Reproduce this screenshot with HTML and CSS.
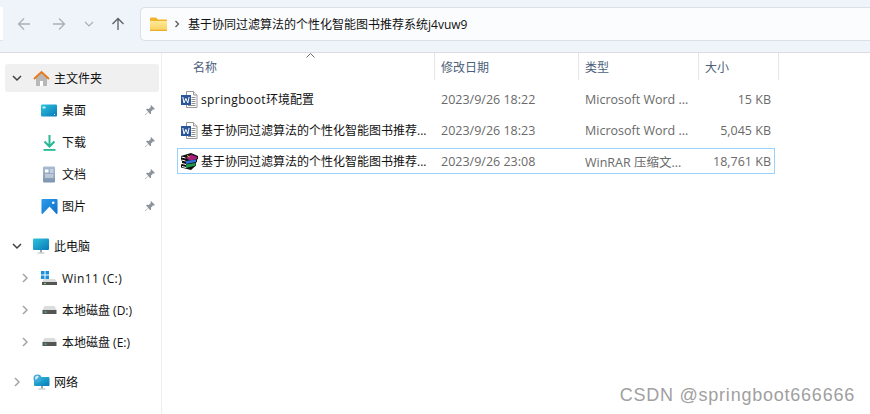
FILE: index.html
```html
<!DOCTYPE html>
<html lang="zh-CN">
<head>
<meta charset="utf-8">
<title>基于协同过滤算法的个性化智能图书推荐系统j4vuw9</title>
<link rel="stylesheet" href="styles.css">
</head>
<body>
<svg class="defs" width="0" height="0" aria-hidden="true">
  <defs>
    <linearGradient id="gScreen" x1="0" y1="0" x2="1" y2="1"><stop offset="0" stop-color="#2cc4dc"/><stop offset="1" stop-color="#0a78b8"/></linearGradient>
    <linearGradient id="gDoc" x1="0" y1="0" x2="0" y2="1"><stop offset="0" stop-color="#a9bcd2"/><stop offset="1" stop-color="#7d94b0"/></linearGradient>
    <linearGradient id="gPic" x1="0" y1="0" x2="1" y2="1"><stop offset="0" stop-color="#2a9cec"/><stop offset="1" stop-color="#1070c8"/></linearGradient>
    <linearGradient id="gFolder" x1="0" y1="0" x2="0" y2="1"><stop offset="0" stop-color="#ffe99a"/><stop offset="1" stop-color="#fbcf5a"/></linearGradient>
    <symbol id="pin" viewBox="0 0 12 12"><path d="M7 1l4 4-1 .6-1-.2-2 2 .1 2-.8.8-2.2-2.3L1.500 11 1 10.500l3.200-2.700L2 5.600l.8-.8 2 .1 2-2-.2-1z" fill="#8c949c"/></symbol>
    <symbol id="chevR" viewBox="0 0 10 10"><path d="M3 1l4 4-4 4" fill="none" stroke="#a4a4a4" stroke-width="1.500"/></symbol>
    <symbol id="chevD" viewBox="0 0 10 10"><path d="M1 3l4 4 4-4" fill="none" stroke="#404040" stroke-width="1.500"/></symbol>
    <symbol id="drive" viewBox="0 0 16 10"><path d="M3 1h10l2 4H1z" fill="#dcdcdc"/><rect x="1" y="5" width="14" height="4" fill="#555"/><rect x="3" y="6.500" width="2" height="1" fill="#5be37a"/></symbol>
    <symbol id="word" viewBox="0 0 17 17"><path d="M5.500.5h7l3.500 3.500v12.500H5.500z" fill="#fff" stroke="#9a9a9a"/><path d="M12.500.5v3.500H16" fill="#eee" stroke="#9a9a9a"/><path d="M10.500 6.500h4M10.500 8.500h4M10.500 10.500h4M10.500 12.500h4M7 14.500h7.500" stroke="#8e8e8e"/><rect x="0" y="4" width="10" height="10" fill="#2a5699"/><path d="M1.800 6l1.200 6 1.900-4.600L6.800 12 8.100 6" fill="none" stroke="#fff" stroke-width="1"/></symbol>
  </defs>
</svg>
<div class="window">
  <header class="toolbar">
    <div class="tab-stub"></div>
    <nav class="nav-buttons">
      <svg class="nav-btn" width="16" height="16" viewBox="0 0 16 16"><path d="M14 8H2.500M8 2.500L2.500 8 8 13.500" fill="none" stroke="#adb1b6" stroke-width="1.300"/></svg>
      <svg class="nav-btn" width="16" height="16" viewBox="0 0 16 16"><path d="M2 8h11.500M8 2.500L13.500 8 8 13.500" fill="none" stroke="#adb1b6" stroke-width="1.300"/></svg>
      <svg class="nav-btn" width="10" height="10" viewBox="0 0 10 10"><path d="M1 3l4 4 4-4" fill="none" stroke="#adb1b6" stroke-width="1.200"/></svg>
      <svg class="nav-btn" width="16" height="16" viewBox="0 0 16 16"><path d="M8 14V2.500M2.500 8L8 2.500 13.500 8" fill="none" stroke="#5c5f63" stroke-width="1.300"/></svg>
    </nav>
    <div class="address">
      <svg class="folder" width="17" height="14" viewBox="0 0 17 14"><path d="M0 1.500Q0 .5 1 .5h5l2 2h8q1 0 1 1V13q0 1-1 1H1q-1 0-1-1z" fill="#f2b32c"/><path d="M0 4h17v9q0 1-1 1H1q-1 0-1-1z" fill="url(#gFolder)"/><path d="M0 12.800h17V13q0 1-1 1H1q-1 0-1-1z" fill="#e9ac2e"/></svg>
      <svg class="crumb-chev" width="6" height="8" viewBox="0 0 6 8"><path d="M1.500 1l3 3-3 3" fill="none" stroke="#5a5a5a" stroke-width="1.300"/></svg>
      <span class="crumb">基于协同过滤算法的个性化智能图书推荐系统j4vuw9</span>
    </div>
  </header>
  <div class="content">
    <aside class="sidebar">
      <div class="tree-row top active">
        <svg class="chev" width="10" height="10"><use href="#chevD"/></svg>
        <svg class="icon" width="17" height="17" viewBox="0 0 17 17"><path d="M3 8v8h11V8L8.500 3z" fill="#b8b8b8"/><rect x="7" y="11" width="3" height="5" fill="#fff"/><path d="M1 9l7.500-7L16 9" fill="none" stroke="#e8791c" stroke-width="2"/></svg>
        <span>主文件夹</span>
      </div>
      <div class="tree-row sub pinned">
        <svg class="icon" width="17" height="13" viewBox="0 0 17 13"><rect width="16" height="12" y="0.500" rx="1" fill="url(#gScreen)"/><rect x="1.500" y="2.500" width="3" height="2" fill="#bff0fa"/><rect x="13" y="10" width="1" height="1" fill="#bff0fa"/></svg>
        <span>桌面</span>
        <svg class="pin" width="12" height="12"><use href="#pin"/></svg>
      </div>
      <div class="tree-row sub pinned">
        <svg class="icon" width="17" height="17" viewBox="0 0 17 17"><path d="M8.500 1v11M3.500 7.500l5 5 5-5" fill="none" stroke="#26b896" stroke-width="2"/><rect x="2.500" y="15" width="12" height="1.800" fill="#26b896"/></svg>
        <span>下载</span>
        <svg class="pin" width="12" height="12"><use href="#pin"/></svg>
      </div>
      <div class="tree-row sub pinned">
        <svg class="icon" width="17" height="17" viewBox="0 0 17 17"><rect x="2" y="0.500" width="12" height="16" rx="1" fill="url(#gDoc)"/><path d="M4 3.500h3.500v3H4z" fill="#fff"/><path d="M9 4h3.500M9 6h3.500M4 9h8.500M4 11h8.500" stroke="#fff" stroke-width=".8"/></svg>
        <span>文档</span>
        <svg class="pin" width="12" height="12"><use href="#pin"/></svg>
      </div>
      <div class="tree-row sub pinned">
        <svg class="icon" width="17" height="15" viewBox="0 0 15 14"><rect width="15" height="14" rx="1" fill="url(#gPic)"/><path d="M1 14l6.500-7L14 14z" fill="#fff"/><circle cx="11" cy="3.500" r="1.200" fill="#fff"/></svg>
        <span>图片</span>
        <svg class="pin" width="12" height="12"><use href="#pin"/></svg>
      </div>
      <div class="tree-row top group">
        <svg class="chev" width="10" height="10"><use href="#chevD"/></svg>
        <svg class="icon" width="17" height="16" viewBox="0 0 17 16"><rect y="0.500" width="16" height="11.500" rx="1" fill="url(#gScreen)"/><rect x="7" y="12" width="2" height="2.500" fill="#9aa6ac"/><rect x="4.500" y="14.500" width="7" height="1" fill="#b4bdc2"/></svg>
        <span>此电脑</span>
      </div>
      <div class="tree-row sub">
        <svg class="chev" width="10" height="10"><use href="#chevR"/></svg>
        <svg class="icon" width="17" height="15" viewBox="0 0 17 15"><path d="M0 0h3.500v3.500H0zM4.500 0H8v3.500H4.500zM0 4.500h3.500V8H0zM4.500 4.500H8V8H4.500z" fill="#1a8fdc"/><path d="M3 8h11l2 3H1z" fill="#dcdcdc"/><rect x="1" y="11" width="15" height="3" fill="#555"/><rect x="3" y="12" width="2" height="1" fill="#5be37a"/></svg>
        <span class="latin-wide">Win11 (C:)</span>
      </div>
      <div class="tree-row sub">
        <svg class="chev" width="10" height="10"><use href="#chevR"/></svg>
        <svg class="icon" width="17" height="10"><use href="#drive"/></svg>
        <span>本地磁盘 (D:)</span>
      </div>
      <div class="tree-row sub">
        <svg class="chev" width="10" height="10"><use href="#chevR"/></svg>
        <svg class="icon" width="17" height="10"><use href="#drive"/></svg>
        <span>本地磁盘 (E:)</span>
      </div>
      <div class="tree-row top group">
        <svg class="chev" width="10" height="10"><use href="#chevR"/></svg>
        <svg class="icon" width="17" height="16" viewBox="0 0 17 16"><rect x="1" y="3" width="15.500" height="9" rx="1" fill="url(#gScreen)"/><rect x="8" y="12" width="2" height="2.500" fill="#9aa6ac"/><rect x="5.500" y="14.500" width="7" height="1" fill="#b4bdc2"/><circle cx="4.500" cy="4.500" r="4" fill="#3fa6d8"/><path d="M2 3l2-1.500 2 1-1.500 2L2.500 6z" fill="#cdeaf6"/></svg>
        <span>网络</span>
      </div>
    </aside>
    <main class="files">
      <div class="col-header">
        <div class="col name">名称<svg class="sort" width="9" height="5" viewBox="0 0 9 5"><path d="M.5 4.500l4-4 4 4" fill="none" stroke="#6d6d6d"/></svg></div>
        <div class="col date">修改日期</div>
        <div class="col type">类型</div>
        <div class="col size">大小</div>
      </div>
      <div class="rows">
        <div class="file">
          <div class="file-name"><svg width="17" height="17"><use href="#word"/></svg><span><span class="latin-wide">springboot</span>环境配置</span></div>
          <div class="meta">2023/9/26 18:22</div><div class="meta">Microsoft Word ...</div><div class="meta right">15 KB</div>
        </div>
        <div class="file">
          <div class="file-name"><svg width="17" height="17"><use href="#word"/></svg><span>基于协同过滤算法的个性化智能图书推荐...</span></div>
          <div class="meta">2023/9/26 18:23</div><div class="meta">Microsoft Word ...</div><div class="meta right">5,045 KB</div>
        </div>
        <div class="file selected">
          <div class="file-name">
            <svg width="17" height="17" viewBox="0 0 17 17"><path d="M0 3L10 0l7 3v3l-1 .5V9l-1 .5v3l-5 4.500-10-2.500v-3l1-.5V8L0 7z" fill="#111"/><path d="M5 5l5-3.500 6 2.500v2L9 7.500z" fill="#a81e7c"/><path d="M5 8l10-1.500V9L5 11z" fill="#2f6fd0"/><path d="M5 11.500L14.500 10v2.500L5 15z" fill="#1f9a4a"/><path d="M.5 4l4 1M.5 7l4 1M1 10.500l4 1M1 13.500l4 1" stroke="#fff"/><path d="M6 2.500l2.500 1.500" stroke="#f0d838"/></svg>
            <span>基于协同过滤算法的个性化智能图书推荐...</span>
          </div>
          <div class="meta">2023/9/26 23:08</div><div class="meta">WinRAR 压缩文...</div><div class="meta right">18,761 KB</div>
        </div>
      </div>
    </main>
  </div>
  <div class="watermark">CSDN @springboot666666</div>
</div>
</body>
</html>
```
FILE: styles.css
```css
* { box-sizing: border-box; }
html, body { margin: 0; padding: 0; width: 870px; height: 414px; overflow: hidden; background: #fff; }
body { font-family: "Open Sans", "Noto Sans CJK SC", sans-serif; font-size: 12px; color: #111; }
.defs { position: absolute; }
.window { position: relative; width: 870px; height: 414px; display: flex; flex-direction: column; }

.toolbar { height: 53px; flex: none; display: flex; align-items: flex-start; padding-top: 7px; background: #eff3fa; border-bottom: 1px solid #d9dde3; }
.tab-stub { width: 3px; height: 34px; background: #fff; border-bottom: 1px solid #e0e3e8; flex: none; }
.nav-buttons { display: flex; align-items: center; width: 137px; height: 34px; padding-left: 13px; flex: none; }
.nav-btn { flex: none; }
.nav-btn:nth-child(2) { margin-left: 19px; }
.nav-btn:nth-child(3) { margin-left: 17px; }
.nav-btn:nth-child(4) { margin-left: 16px; }
.address { flex: 1; height: 34px; display: flex; align-items: center; padding-left: 9px; background: #fbfcfe; border: 1px solid #dcdfe4; border-right: 0; border-radius: 5px 0 0 5px; }
.folder { flex: none; }
.crumb-chev { margin-left: 7px; flex: none; }
.crumb { margin-left: 8px; font-size: 12px; color: #111; }

.content { flex: 1; display: flex; min-height: 0; }
.sidebar { width: 162px; flex: none; border-right: 1px solid #eeeeee; padding: 11px 2px 0 5px; }
.tree-row { height: 32px; display: flex; align-items: center; position: relative; white-space: nowrap; }
.tree-row.top .chev { margin-left: 7px; }
.tree-row.top .icon { margin-left: 11px; }
.tree-row.top span { margin-left: 4px; }
.tree-row.sub { padding-left: 36px; }
.tree-row.sub .chev { position: absolute; left: 15px; top: 11px; }
.tree-row.sub span { margin-left: 4px; }
.tree-row.active { height: 28px; margin-bottom: 2px; background: #f0f0f0; border-radius: 3px; }
.tree-row.group { margin-top: 8px; }
.icon { width: 17px; flex: none; }
.pin { position: absolute; left: 139px; top: 10px; }
.latin-wide { letter-spacing: 0.4px; }

.files { flex: 1; min-width: 0; }
.col-header { height: 27px; display: grid; grid-template-columns: 273px 144px 120px 80px; font-size: 12px; color: #4c607a; }
.col { display: flex; align-items: center; padding-left: 6px; border-right: 1px solid #e5e5e5; position: relative; }
.col.name { padding-left: 31px; }
.sort { position: absolute; left: 144px; top: 0; }
.rows { padding: 6px 0 0 15px; }
.file { width: 598px; height: 26px; margin-bottom: 5px; display: grid; grid-template-columns: 263px 144px 120px 66px; align-items: center; border: 1px solid transparent; }
.file.selected { border-color: #99d1ff; }
.file-name { display: flex; align-items: center; gap: 3px; padding-left: 3px; white-space: nowrap; }
.meta { color: #6a6a6a; white-space: nowrap; font-size: 12.5px; }
.right { text-align: right; }

.watermark { position: absolute; right: 15px; top: 385px; font-family: "Liberation Sans", sans-serif; font-size: 18px; color: #a0a0a0; letter-spacing: 0.77px; white-space: nowrap; }
```
